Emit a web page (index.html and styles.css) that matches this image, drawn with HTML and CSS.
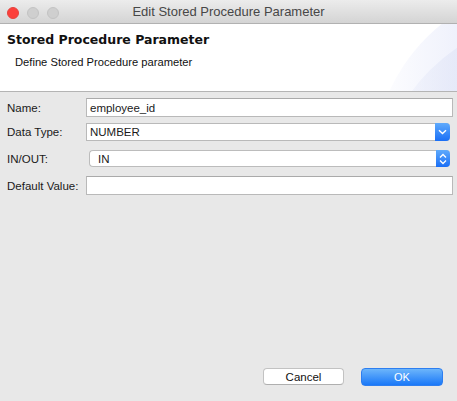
FILE: index.html
```html
<!DOCTYPE html>
<html>
<head>
<meta charset="utf-8">
<link rel="stylesheet" href="styles.css">
</head>
<body>
<div class="window">
  <div class="titlebar">
    <div class="lights">
      <span class="light red"></span>
      <span class="light"></span>
      <span class="light"></span>
    </div>
    <div class="title">Edit Stored Procedure Parameter</div>
  </div>
  <div class="header">
    <div class="deco deco-outer"></div>
    <div class="deco deco-inner"></div>
    <div class="h-title">Stored Procedure Parameter</div>
    <div class="h-desc">Define Stored Procedure parameter</div>
  </div>
  <div class="form">
    <div class="row r1">
      <label class="lbl">Name:</label>
      <div class="field text">employee_id</div>
    </div>
    <div class="row r2">
      <label class="lbl">Data Type:</label>
      <div class="field combo">
        <span class="val">NUMBER</span>
        <span class="arrow">
          <svg width="9" height="6" viewBox="0 0 9 6"><path d="M1 1.2 L4.5 4.5 L8 1.2" fill="none" stroke="#fff" stroke-width="1.4"/></svg>
        </span>
      </div>
    </div>
    <div class="row r3">
      <label class="lbl">IN/OUT:</label>
      <div class="field popup">
        <span class="val">IN</span>
        <span class="arrow">
          <svg width="8" height="12" viewBox="0 0 8 12"><path d="M1 4.5 L4 1.5 L7 4.5 M1 7.5 L4 10.5 L7 7.5" fill="none" stroke="#fff" stroke-width="1.3"/></svg>
        </span>
      </div>
    </div>
    <div class="row r4">
      <label class="lbl">Default Value:</label>
      <div class="field text"></div>
    </div>
  </div>
  <div class="footer">
    <button class="btn cancel">Cancel</button>
    <button class="btn ok">OK</button>
  </div>
</div>
</body>
</html>
```
FILE: styles.css
```css
html, body {
  margin: 0;
  padding: 0;
}
body {
  width: 457px;
  height: 401px;
  overflow: hidden;
  font-family: "Liberation Sans", Arial, sans-serif;
  font-size: 11.5px;
  color: #1a1a1a;
}
.window {
  width: 457px;
  height: 401px;
  display: flex;
  flex-direction: column;
  background: #e8e8e8;
}
.titlebar {
  height: 23px;
  border-bottom: 1px solid #b1b1b1;
  background: linear-gradient(#ececec, #d4d4d4);
  position: relative;
  display: flex;
  align-items: center;
  justify-content: center;
  flex-shrink: 0;
}
.lights {
  position: absolute;
  left: 7px;
  top: 7px;
  display: flex;
  gap: 8px;
}
.light {
  box-sizing: border-box;
  width: 12px;
  height: 12px;
  border-radius: 50%;
  background: #cfcfcf;
  border: 1px solid #c3c3c3;
}
.light.red {
  background: #fc3f3a;
  border-color: #e5433e;
}
.title {
  font-size: 13px;
  color: #474747;
  line-height: 16px;
  margin-top: 1px;
}
.header {
  height: 67px;
  background: #fff;
  border-bottom: 1px solid #b4b4b4;
  position: relative;
  overflow: hidden;
  flex-shrink: 0;
}
.deco {
  position: absolute;
  border-radius: 50%;
  width: 376px;
  height: 376px;
}
.deco-outer {
  left: 372px;
  top: -42px;
  background: linear-gradient(90deg, rgba(238,241,252,0) 0%, rgba(234,237,251,1) 30%, #e7eaf9 100%);
}
.deco-inner {
  left: 375px;
  top: -9px;
  background: linear-gradient(90deg, rgba(222,227,246,0) 0%, rgba(222,227,246,0.9) 35%, #dbe0f5 100%);
}
.h-title {
  position: relative;
  font-family: "DejaVu Sans", sans-serif;
  font-weight: bold;
  font-size: 12.5px;
  line-height: 15px;
  color: #111;
  margin: 8px 0 0 7px;
}
.h-desc {
  position: relative;
  font-size: 11.2px;
  line-height: 14px;
  color: #111;
  margin: 8px 0 0 15px;
}
.form {
  flex: 1;
  display: flex;
  flex-direction: column;
  padding: 6px 4px 0 7px;
}
.row {
  display: flex;
  align-items: center;
}
.lbl {
  width: 79px;
  flex-shrink: 0;
}
.r1 { height: 19px; }
.r2 { height: 18px; margin-top: 6px; }
.r3 { height: 17px; margin-top: 9px; }
.r4 { height: 19px; margin-top: 9px; }
.field {
  box-sizing: border-box;
  height: 100%;
  flex: 1;
  background: #fff;
  display: flex;
  align-items: center;
}
.field.text {
  border: 1px solid #b9b9b9;
  border-top-color: #aaaaaa;
  padding-left: 3px;
}
.field.combo {
  border: 1px solid #b9b9b9;
  border-right: none;
  border-radius: 0 4px 4px 0;
  margin-right: 3px;
  padding-left: 3px;
  justify-content: space-between;
}
.field.popup {
  border: 1px solid #bcbcbc;
  border-right: none;
  border-radius: 4px;
  margin-left: 3px;
  margin-right: 3px;
  padding-left: 8px;
  justify-content: space-between;
}
.arrow {
  align-self: stretch;
  margin: -1px 0;
  width: 15px;
  background: linear-gradient(#5faafc, #1a6ff6);
  border-radius: 0 4px 4px 0;
  display: flex;
  align-items: center;
  justify-content: center;
}
.popup .arrow {
  width: 14px;
}
.footer {
  display: flex;
  justify-content: flex-end;
  gap: 17px;
  padding: 0 14px 15px 0;
}
.btn {
  font-family: "Liberation Sans", Arial, sans-serif;
  font-size: 11.5px;
  padding: 0;
  margin: 0;
  box-sizing: border-box;
  display: flex;
  align-items: center;
  justify-content: center;
  border-radius: 4px;
}
.cancel {
  width: 81px;
  height: 17px;
  margin-bottom: 1px;
  background: #fff;
  border: 1px solid #c2c2c2;
  border-bottom-color: #afafaf;
  color: #111;
}
.ok {
  width: 82px;
  height: 18px;
  background: linear-gradient(#6cb5fb, #1a78f8);
  border: 1px solid #2d7ef0;
  color: #fff;
  font-size: 11px;
}
```
